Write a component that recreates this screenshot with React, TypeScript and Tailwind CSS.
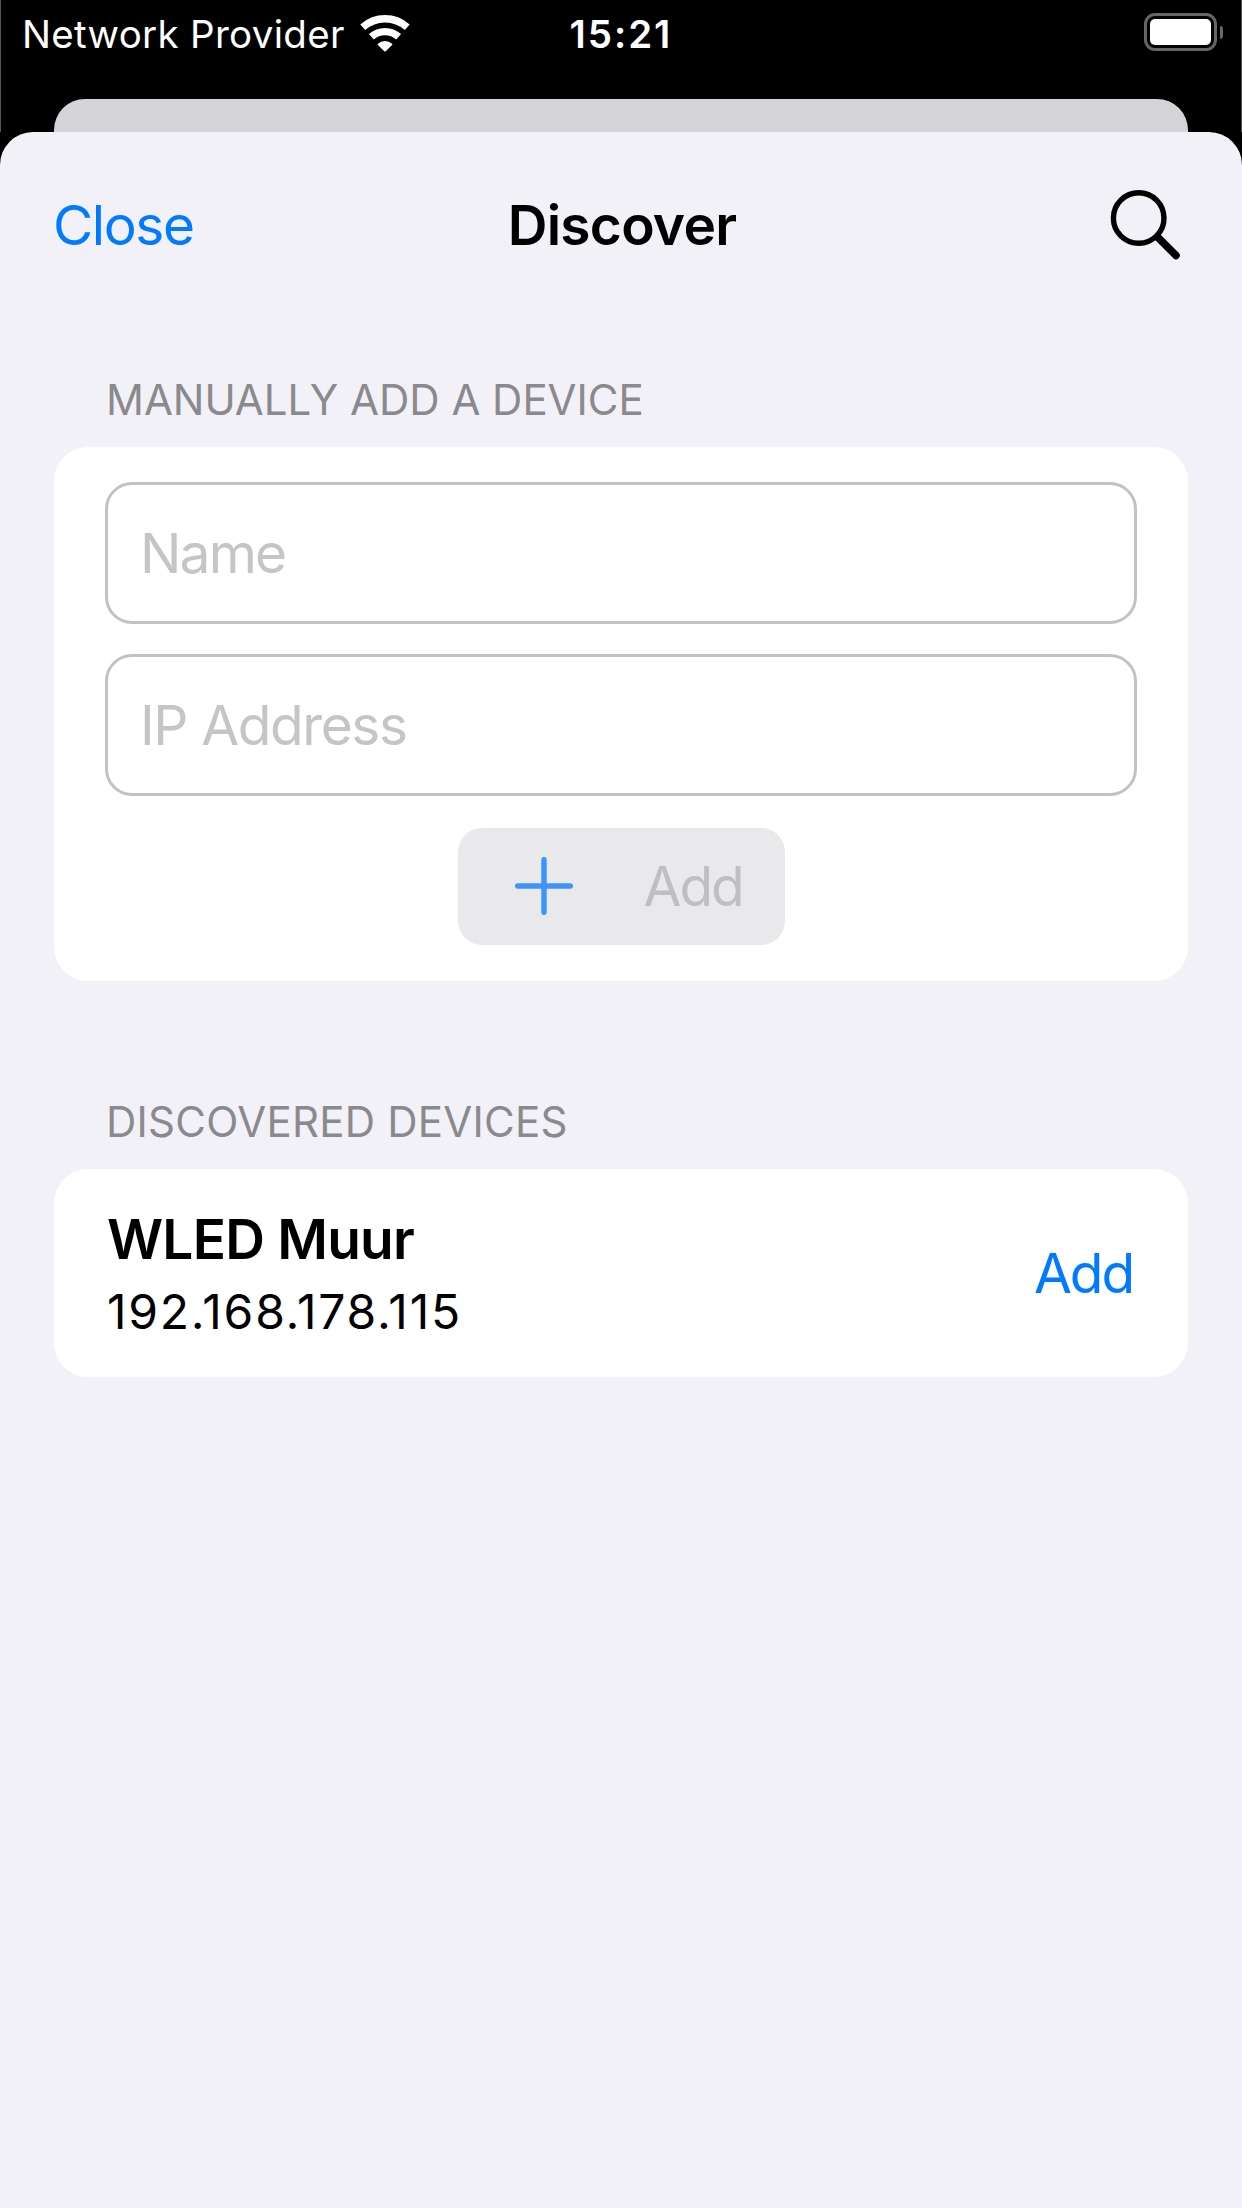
import type { ReactNode } from "react";

function WifiIcon() {
  return (
    <svg width="50" height="38" viewBox="0 0 50 38" fill="none" stroke="#fff" className="-mt-[2px] block shrink-0">
      <path d="M2.800 13.300A33.250 33.250 0 0 1 47.200 13.300" strokeWidth="7.500" />
      <path d="M11.350 22.800A20.400 20.400 0 0 1 38.650 22.800" strokeWidth="7.300" />
      <path d="M18.600 30.400A9.800 9.800 0 0 1 31.400 30.400L25 36.500z" fill="#fff" strokeWidth="2" strokeLinejoin="round" />
    </svg>
  );
}

function BatteryIcon() {
  return (
    <div className="flex items-center gap-[3px]">
      <div className="h-[38px] w-[73px] rounded-[11px] border-[3px] border-[#666] p-[3px]">
        <div className="h-full w-full rounded-[5px] bg-white" />
      </div>
      <div className="h-[13px] w-[3px] rounded-r-full bg-[#666]" />
    </div>
  );
}

function SearchIcon() {
  return (
    <svg width="72" height="72" viewBox="0 0 72 72" fill="none" stroke="#000" strokeLinecap="round" className="block">
      <circle cx="28.700" cy="29" r="25.300" strokeWidth="5.400" />
      <path d="M48 48.500L66 66.500" strokeWidth="7.500" />
    </svg>
  );
}

function PlusIcon() {
  return (
    <svg width="58" height="58" viewBox="0 0 58 58" stroke="#3d95fb" strokeWidth="5.500" strokeLinecap="round" className="-mt-px block">
      <path d="M29 2.700V55.300M2.700 29H55.300" />
    </svg>
  );
}

function SectionHeader({ children, className }: { children: ReactNode; className: string }) {
  return <h2 className={"h-[50px] pl-[52px] text-[42px] leading-[50px] text-[#8a8a8e] " + className}>{children}</h2>;
}

function Field({ placeholder, className }: { placeholder: string; className: string }) {
  return (
    <input
      placeholder={placeholder}
      className={
        "block h-[142px] w-full rounded-[27px] border-[3px] border-[#c2c2c2] bg-white pl-[32px] text-[55px] outline-none placeholder:text-[#c5c5c7] placeholder:opacity-100 " +
        className
      }
    />
  );
}

export default function App() {
  return (
    <div className="flex h-[2208px] w-[1242px] flex-col overflow-hidden bg-black font-['Inter',sans-serif]">
      <div className="flex h-[132px] shrink-0 flex-col border-x border-[#555]">
        <div className="grid h-[99px] shrink-0 grid-cols-3 items-start text-[38.5px] leading-[68px] text-white">
          <div className="flex h-[68px] items-center whitespace-nowrap pl-[21px]">
            <span className="tracking-[0.31px]">Network Provider</span>
            <span className="ml-[15px]">
              <WifiIcon />
            </span>
          </div>
          <div className="text-center font-semibold tracking-[1.94px]">15:21</div>
          <div className="flex h-[64px] items-center justify-end pr-[18px]">
            <BatteryIcon />
          </div>
        </div>
        <div className="mx-[53px] flex-1 rounded-t-[31px] bg-[#d4d3d8]" />
      </div>

      <main className="flex-1 rounded-t-[33px] bg-[#f2f1f7] px-[54px]">
        <header className="grid h-[186px] grid-cols-3 items-center leading-[66px]">
          <button className="-ml-px justify-self-start text-[55px] tracking-[-1.38px] text-[#007aff]">Close</button>
          <h1 className="ml-[2px] justify-self-center text-[55px] font-semibold tracking-[-0.73px] text-black">Discover</h1>
          <button className="mr-[6px] justify-self-end">
            <SearchIcon />
          </button>
        </header>

        <SectionHeader className="mt-[57px] tracking-[-0.03px]">MANUALLY ADD A DEVICE</SectionHeader>
        <section className="mt-[22px] flex h-[534px] flex-col items-center rounded-[34px] bg-white px-[51px] pt-[35px]">
          <Field placeholder="Name" className="tracking-[-1.83px]" />
          <Field placeholder="IP Address" className="mt-[30px] tracking-[-1.4px]" />
          <button className="mt-[32px] flex h-[117px] w-[327px] items-center rounded-[24px] bg-[#e9e9eb] pl-[57px]">
            <PlusIcon />
            <span className="-mt-[2px] ml-[71px] text-[55px] leading-[66px] tracking-[-2.06px] text-[#bfbfc1]">Add</span>
          </button>
        </section>

        <SectionHeader className="mt-[116px] tracking-[0.25px]">DISCOVERED DEVICES</SectionHeader>
        <section className="mt-[22px] flex h-[208px] items-center justify-between rounded-[34px] bg-white pl-[53px] pr-[55px]">
          <div className="-mt-[5px]">
            <p className="mt-px text-[55px] font-semibold leading-[82px] tracking-[-0.77px] text-black">WLED Muur</p>
            <p className="text-[48px] leading-[64px] tracking-[1.77px] text-black">192.168.178.115</p>
          </div>
          <button className="text-[55px] leading-[66px] tracking-[-2.06px] text-[#007aff]">Add</button>
        </section>
      </main>
    </div>
  );
}
